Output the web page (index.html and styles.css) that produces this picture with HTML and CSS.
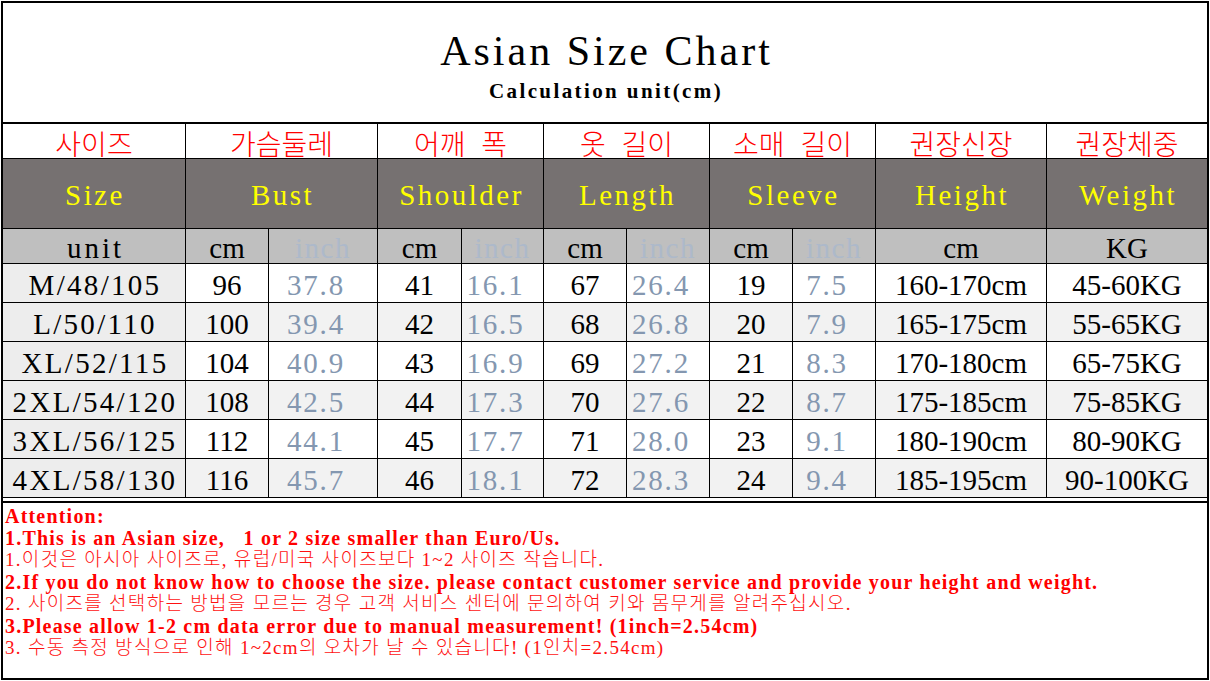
FILE: index.html
```html
<!DOCTYPE html>
<html lang="ko">
<head>
<meta charset="utf-8">
<title>Asian Size Chart</title>
<link rel="stylesheet" href="styles.css">
</head>
<body>
<div class="sheet">
  <header class="title">
    <h1>Asian Size Chart</h1>
    <p class="sub">Calculation unit(cm)</p>
  </header>
  <div class="chart">
    <div class="c kr">사이즈</div>
    <div class="c kr span2">가슴둘레</div>
    <div class="c kr span2">어깨 폭</div>
    <div class="c kr span2">옷 길이</div>
    <div class="c kr span2">소매 길이</div>
    <div class="c kr">권장신장</div>
    <div class="c kr">권장체중</div>

    <div class="c hd">Size</div>
    <div class="c hd span2">Bust</div>
    <div class="c hd span2">Shoulder</div>
    <div class="c hd span2">Length</div>
    <div class="c hd span2">Sleeve</div>
    <div class="c hd">Height</div>
    <div class="c hd">Weight</div>

    <div class="c un first">unit</div>
    <div class="c un">cm</div><div class="c un inch">inch</div>
    <div class="c un">cm</div><div class="c un inch">inch</div>
    <div class="c un">cm</div><div class="c un inch">inch</div>
    <div class="c un">cm</div><div class="c un inch">inch</div>
    <div class="c un">cm</div>
    <div class="c un">KG</div>

    <div class="row">
      <div class="c d size">M/48/105</div>
      <div class="c d">96</div><div class="c d in">37.8</div>
      <div class="c d">41</div><div class="c d in">16.1</div>
      <div class="c d">67</div><div class="c d in">26.4</div>
      <div class="c d">19</div><div class="c d in">7.5</div>
      <div class="c d">160-170cm</div>
      <div class="c d">45-60KG</div>
    </div>
    <div class="row alt">
      <div class="c d size">L/50/110</div>
      <div class="c d">100</div><div class="c d in">39.4</div>
      <div class="c d">42</div><div class="c d in">16.5</div>
      <div class="c d">68</div><div class="c d in">26.8</div>
      <div class="c d">20</div><div class="c d in">7.9</div>
      <div class="c d">165-175cm</div>
      <div class="c d">55-65KG</div>
    </div>
    <div class="row">
      <div class="c d size">XL/52/115</div>
      <div class="c d">104</div><div class="c d in">40.9</div>
      <div class="c d">43</div><div class="c d in">16.9</div>
      <div class="c d">69</div><div class="c d in">27.2</div>
      <div class="c d">21</div><div class="c d in">8.3</div>
      <div class="c d">170-180cm</div>
      <div class="c d">65-75KG</div>
    </div>
    <div class="row alt">
      <div class="c d size">2XL/54/120</div>
      <div class="c d">108</div><div class="c d in">42.5</div>
      <div class="c d">44</div><div class="c d in">17.3</div>
      <div class="c d">70</div><div class="c d in">27.6</div>
      <div class="c d">22</div><div class="c d in">8.7</div>
      <div class="c d">175-185cm</div>
      <div class="c d">75-85KG</div>
    </div>
    <div class="row">
      <div class="c d size">3XL/56/125</div>
      <div class="c d">112</div><div class="c d in">44.1</div>
      <div class="c d">45</div><div class="c d in">17.7</div>
      <div class="c d">71</div><div class="c d in">28.0</div>
      <div class="c d">23</div><div class="c d in">9.1</div>
      <div class="c d">180-190cm</div>
      <div class="c d">80-90KG</div>
    </div>
    <div class="row alt">
      <div class="c d size">4XL/58/130</div>
      <div class="c d">116</div><div class="c d in">45.7</div>
      <div class="c d">46</div><div class="c d in">18.1</div>
      <div class="c d">72</div><div class="c d in">28.3</div>
      <div class="c d">24</div><div class="c d in">9.4</div>
      <div class="c d">185-195cm</div>
      <div class="c d">90-100KG</div>
    </div>
  </div>
  <div class="notes">
    <p class="en">Attention:</p>
    <p class="en">1.This is an Asian size,&nbsp;&nbsp; 1 or 2 size smaller than Euro/Us.</p>
    <p class="ko">1.이것은 아시아 사이즈로, 유럽/미국 사이즈보다 1~2 사이즈 작습니다.</p>
    <p class="en">2.If you do not know how to choose the size. please contact customer service and provide your height and weight.</p>
    <p class="ko">2. 사이즈를 선택하는 방법을 모르는 경우 고객 서비스 센터에 문의하여 키와 몸무게를 알려주십시오.</p>
    <p class="en">3.Please allow 1-2 cm data error due to manual measurement! (1inch=2.54cm)</p>
    <p class="ko">3. 수동 측정 방식으로 인해 1~2cm의 오차가 날 수 있습니다! (1인치=2.54cm)</p>
  </div>
</div>
</body>
</html>
```

FILE: styles.css
```css
html, body {
  margin: 0;
  padding: 0;
  background: #fff;
}

.sheet {
  margin: 1px 0 0 1px;
  width: 1204px;
  border: 2px solid #000;
  font-family: "Liberation Serif", "Noto Sans CJK KR", serif;
  color: #000;
}

.title {
  box-sizing: border-box;
  height: 121px;
  border-bottom: 2px solid #000;
  padding-top: 24px;
  text-align: center;
}

.title h1 {
  margin: 0;
  font: 400 42px/48px "Liberation Serif", serif;
  letter-spacing: 3px;
  padding-left: 3px;
}

.title .sub {
  margin: 4px 0 0;
  font: 700 21px/24px "Liberation Serif", serif;
  letter-spacing: 2.4px;
  padding-left: 2px;
}

.chart {
  display: grid;
  grid-template-columns: 182px 82px 108px 83px 81px 82px 82px 82px 82px 170px 160px;
  grid-template-rows: 34px 69px 34px repeat(6, 38px);
  gap: 1px;
  background: #000;
  border-bottom: 1px solid #000;
}

.row {
  display: contents;
}

.c {
  background: #fff;
  display: flex;
  align-items: center;
  justify-content: center;
  white-space: nowrap;
  box-sizing: border-box;
}

.span2 {
  grid-column: span 2;
}

.kr {
  font: 300 28px/26px "Noto Sans CJK KR", sans-serif;
  color: #f00;
  padding-top: 3px;
  word-spacing: 8px;
}

.hd {
  background: #767171;
  color: #ffff00;
  font: 400 29px/32px "Liberation Serif", serif;
  letter-spacing: 2.5px;
  padding: 3px 0 0 2px;
}

.un {
  background: #bfbfbf;
  font: 400 29px/30px "Liberation Serif", serif;
  padding-top: 3px;
}

.un.first {
  letter-spacing: 3px;
  padding-left: 3px;
}

.un.inch {
  color: #adb9ca;
  letter-spacing: 1.5px;
}

.d {
  font: 400 29px/30px "Liberation Serif", serif;
  padding-top: 4px;
}

.d.size {
  background: #ededed;
  letter-spacing: 2.3px;
  padding-left: 2px;
}

.d.in {
  color: #8497b0;
  letter-spacing: 1.8px;
  padding-right: 14px;
}

.alt .d {
  background: #f2f2f2;
}

.alt .d.size {
  background: #ededed;
}

.notes {
  box-sizing: border-box;
  height: 177px;
  margin-top: 3px;
  border-top: 2px solid #000;
  padding: 2px 0 0 2px;
  color: #f00;
}

.notes p {
  margin: 0;
  line-height: 22px;
  white-space: nowrap;
}

.notes .en {
  font: 700 20px/22px "Liberation Serif", serif;
  letter-spacing: 1.2px;
}

.notes .ko {
  font: 300 19px/22px "Liberation Serif", "Noto Sans CJK KR", serif;
  letter-spacing: 1.3px;
  color: #f11;
}
```
